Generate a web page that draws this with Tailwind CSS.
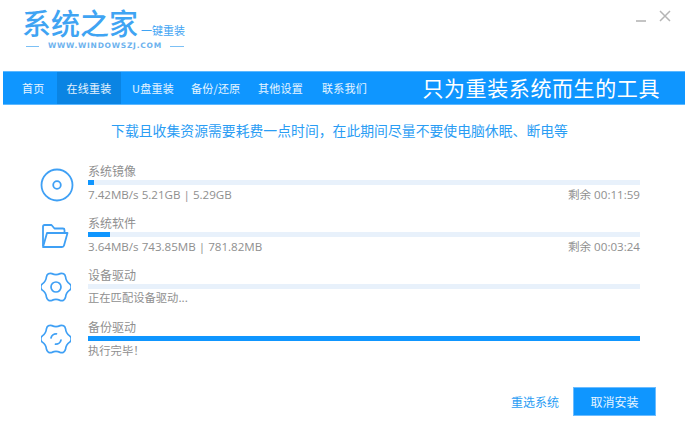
<!DOCTYPE html>
<html lang="zh-CN">
<head>
<meta charset="UTF-8">
<title>系统之家一键重装</title>
<script src="https://cdn.jsdelivr.net/npm/@tailwindcss/browser@4"></script>
</head>
<body class="bg-white font-['Noto_Sans_CJK_SC','Noto_Sans',sans-serif]">
<div class="relative w-[685px] h-[429px] overflow-hidden bg-white">

  <!-- header -->
  <header class="h-[71px] flex justify-between">
    <div class="pl-[22px] pt-[4px] w-[190px]">
      <div class="flex items-end h-[36px]">
        <span class="text-[29px] leading-[36px] font-medium text-[#3fa4f3] whitespace-nowrap">系统之家</span>
        <span class="text-[11px] leading-[14px] mb-[3px] ml-[3px] text-[#3fa4f3] whitespace-nowrap">一键重装</span>
      </div>
      <div class="flex items-center mt-[1px] h-[10px]">
        <span class="w-[13px] h-px bg-[#7cc0f5] ml-[4px]"></span>
        <span class="ml-[9px] text-[7.5px] leading-[10px] font-bold tracking-[.75px] text-[#6cb2ee] font-['DejaVu_Sans',sans-serif] whitespace-nowrap">WWW.WINDOWSZJ.COM</span>
        <span class="ml-[8px] w-[14px] h-px bg-[#7cc0f5]"></span>
      </div>
    </div>
    <div class="flex pt-[10px] pr-[14px] gap-[12px] h-fit">
      <svg class="w-[12px] h-[12px] mt-px" viewBox="0 0 12 12"><path d="M1 10h10" stroke="#b5b5b5" stroke-width="1.6" fill="none"/></svg>
      <svg class="w-[12px] h-[12px]" viewBox="0 0 12 12"><path d="M1 1l10 10M11 1L1 11" stroke="#b5b5b5" stroke-width="1.5" fill="none"/></svg>
    </div>
  </header>

  <!-- nav -->
  <nav class="ml-[3px] h-[34px] bg-[#0f96ff] flex items-center justify-between border-y border-[#5db8ff] text-white">
    <div class="flex h-full text-[11px] tracking-[.25px] text-white/90">
      <a class="w-[54px] pl-[19px] flex items-center">首页</a>
      <a class="w-[64px] flex items-center justify-center bg-[#0a84e3]">在线重装</a>
      <a class="w-[70px] flex items-center pl-[11px]">U盘重装</a>
      <a class="w-[67px] flex items-center whitespace-nowrap">备份/还原</a>
      <a class="w-[64px] flex items-center">其他设置</a>
      <a class="w-[64px] flex items-center">联系我们</a>
    </div>
    <div class="text-[21px] leading-[30px] tracking-[.6px] pr-[25px] mb-[3px] whitespace-nowrap">只为重装系统而生的工具</div>
  </nav>

  <p class="mt-[15px] text-center text-[13.85px] leading-[20px] text-[#2a9df4] pr-[6px] whitespace-nowrap">下载且收集资源需要耗费一点时间，在此期间尽量不要使电脑休眠、断电等</p>

  <!-- tasks -->
  <section class="mt-[25px] pl-[40px] pr-[45px] flex flex-col text-[#8f8f8f]">

    <div class="h-[52px] flex">
      <div class="w-[48px] pt-[3px]">
        <svg class="w-[34px] h-[34px]" viewBox="0 0 34 34" fill="none" stroke="#3fa0f5">
          <circle cx="17" cy="17" r="15.5" stroke-width="1.8"/>
          <circle cx="17" cy="17" r="3.8" stroke-width="1.8"/>
        </svg>
      </div>
      <div class="flex-1">
        <div class="text-[12px] leading-[11px] mb-[4px]">系统镜像</div>
        <div class="h-[5px] bg-[#e8f1fb]"><div class="h-full w-[1%] bg-[#0f96ff]"></div></div>
        <div class="flex justify-between mt-[1px] text-[11.6px] leading-[17px] font-['Open_Sans','Noto_Sans_CJK_SC',sans-serif]">
          <span>7.42MB/s 5.21GB | 5.29GB</span><span>剩余 00:11:59</span>
        </div>
      </div>
    </div>

    <div class="h-[52px] flex">
      <div class="w-[48px] pt-[6px] pl-px">
        <svg class="w-[28px] h-[26px]" viewBox="0 0 28 26" fill="none" stroke="#3fa0f5" stroke-width="1.8" stroke-linejoin="round">
          <path d="M2 23V3.500Q2 2 3.500 2h7l3 3.500h8.500q1.500 0 1.500 1.500V10"/>
          <path d="M6 10h20.500L23 22.500q-.4 1.500-2 1.500H2z"/>
        </svg>
      </div>
      <div class="flex-1">
        <div class="text-[12px] leading-[11px] mb-[4px]">系统软件</div>
        <div class="h-[5px] bg-[#e8f1fb]"><div class="h-full w-[4%] bg-[#0f96ff]"></div></div>
        <div class="flex justify-between mt-[1px] text-[11.6px] leading-[17px] font-['Open_Sans','Noto_Sans_CJK_SC',sans-serif]">
          <span>3.64MB/s 743.85MB | 781.82MB</span><span>剩余 00:03:24</span>
        </div>
      </div>
    </div>

    <div class="h-[52px] flex">
      <div class="w-[48px] pt-[3px] pl-px">
        <svg class="w-[30px] h-[30px]" viewBox="0 0 30 30" fill="none" stroke="#3fa0f5" stroke-width="1.7" stroke-linejoin="round">
          <path d="M28.640 11.850A4 4 0 0 1 28.640 18.150Q24.960 20.750 24.550 25.240A4 4 0 0 1 19.090 28.390Q15 26.500 10.910 28.390A4 4 0 0 1 5.450 25.240Q5.040 20.750 1.360 18.150A4 4 0 0 1 1.360 11.850Q5.040 9.250 5.450 4.760A4 4 0 0 1 10.910 1.610Q15 3.500 19.090 1.610A4 4 0 0 1 24.550 4.760Q24.960 9.250 28.640 11.850Z"/>
          <circle cx="15" cy="15" r="5"/>
        </svg>
      </div>
      <div class="flex-1">
        <div class="text-[12px] leading-[11px] mb-[4px]">设备驱动</div>
        <div class="h-[5px] bg-[#e8f1fb]"></div>
        <div class="text-[11.3px] leading-[17px]">正在匹配设备驱动...</div>
      </div>
    </div>

    <div class="h-[52px] flex">
      <div class="w-[48px] pt-[3px] pl-px">
        <svg class="w-[30px] h-[30px]" viewBox="0 0 30 30" fill="none" stroke="#3fa0f5" stroke-width="1.7" stroke-linejoin="round">
          <path d="M28.640 11.850A4 4 0 0 1 28.640 18.150Q24.960 20.750 24.550 25.240A4 4 0 0 1 19.090 28.390Q15 26.500 10.910 28.390A4 4 0 0 1 5.450 25.240Q5.040 20.750 1.360 18.150A4 4 0 0 1 1.360 11.850Q5.040 9.250 5.450 4.760A4 4 0 0 1 10.910 1.610Q15 3.500 19.090 1.610A4 4 0 0 1 24.550 4.760Q24.960 9.250 28.640 11.850Z"/>
          <path d="M10 14A5.200 5.200 0 0 1 15.500 9.800M20 16A5.200 5.200 0 0 1 14.500 20.200" stroke-linecap="round"/>
        </svg>
      </div>
      <div class="flex-1">
        <div class="text-[12px] leading-[11px] mb-[4px]">备份驱动</div>
        <div class="h-[5px] bg-[#0f96ff]"></div>
        <div class="text-[11.3px] leading-[17px] mt-px">执行完毕！</div>
      </div>
    </div>
  </section>

  <!-- actions -->
  <footer class="mt-[14px] pr-[29px] flex justify-end items-center gap-[14px]">
    <a class="text-[12px] text-[#2a9df4]">重选系统</a>
    <button class="w-[83px] h-[29px] bg-[#0f96ff] border border-[#6cbcff] text-white/90 text-[12px]">取消安装</button>
  </footer>
</div>
</body>
</html>
